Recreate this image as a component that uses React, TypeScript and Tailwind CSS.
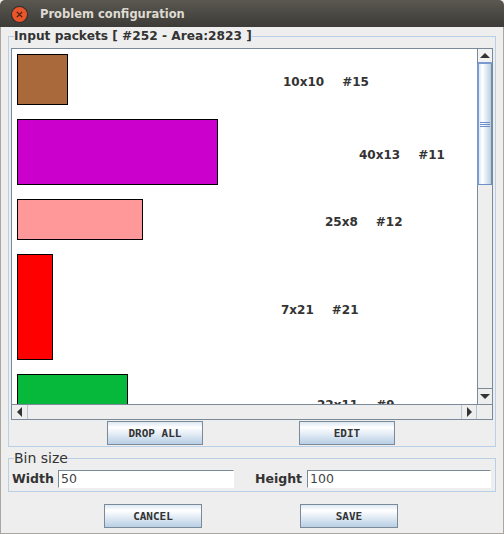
const packets = [
  { label: '10x10', id: '#15', box: 'w-[51px] h-[51px] bg-[#a9693a]', gap: 'ml-[215px]' },
  { label: '40x13', id: '#11', box: 'w-[201px] h-[66px] bg-[#cc00cc]', gap: 'ml-[141px]' },
  { label: '25x8', id: '#12', box: 'w-[126px] h-[41px] bg-[#ff9999]', gap: 'ml-[182px]' },
  { label: '7x21', id: '#21', box: 'w-[36px] h-[106px] bg-[#ff0000]', gap: 'ml-[228px]' },
  { label: '22x11', id: '#9', box: 'w-[111px] h-[56px] bg-[#06b93a]', gap: 'ml-[189px]' },
]

function JavaButton({ children, className }: { children: string; className: string }) {
  return (
    <button
      type="button"
      className={`h-[24px] border border-[#7a8a99] bg-gradient-to-b from-[#dde8f3] via-[#ffffff] via-[25%] to-[#b8cfe5] pt-[2px] font-['DejaVu_Sans_Mono'] text-[11px] font-bold text-[#333333] ${className}`}
    >
      {children}
    </button>
  )
}

export default function App() {
  return (
    <div className="flex h-[534px] w-[504px] flex-col overflow-hidden bg-[#eeeeee] font-['DejaVu_Sans',sans-serif] text-[#333333]">
      <div className="flex h-[27px] shrink-0 items-center rounded-t-[5px] bg-gradient-to-b from-[#5a5851] to-[#3c3b37] pt-[1px] pl-[12px]">
        <span className="flex h-[15px] w-[15px] items-center justify-center rounded-full bg-[#e9562a] text-[#4a2010] ring-1 ring-[#2f2e2b]">
          <svg viewBox="0 0 8 8" className="h-[7px] w-[7px]" fill="none" stroke="currentColor" strokeWidth="1.6">
            <path d="M1 1l6 6M7 1l-6 6" />
          </svg>
        </span>
        <span className="ml-[13px] pt-[1px] text-[11.5px] font-bold text-[#dfdbd2]">Problem configuration</span>
      </div>

      <div className="flex flex-1 flex-col border-x border-b border-[#a8a69f] px-[7px]">
        <fieldset className="mt-[2px] h-[418px] border border-[#b8cfe5] px-[2px] pb-0">
          <legend className="ml-[3px] text-[12.2px] leading-[15px] font-bold">Input packets [ #252 - Area:2823 ]</legend>
          <div className="mt-[4px] flex h-[372px] flex-col border border-[#7a8a99]">
            <div className="flex min-h-0 flex-1">
              <div className="flex-1 overflow-hidden bg-white pt-[5px] pl-[5px]">
                {packets.map((p) => (
                  <div key={p.id} className="mb-[14px] flex items-center">
                    <div className={`shrink-0 border border-black ${p.box}`} />
                    <div className={`flex gap-[18px] pt-[5px] text-[12px] font-bold ${p.gap}`}>
                      <span>{p.label}</span>
                      <span>{p.id}</span>
                    </div>
                  </div>
                ))}
              </div>
              <div className="flex w-[15px] flex-col border-l border-[#7a8a99] bg-[#eeeeee]">
                <div className="flex h-[15px] items-center justify-center border-b-2 border-[#7a9bd0] bg-[#f2f2f2]">
                  <span className="border-x-[5px] border-b-[5px] border-x-transparent border-b-[#333333]" />
                </div>
                <div className="-ml-px flex h-[121px] flex-col items-center justify-center gap-[1px] border-r border-b border-l-2 border-r-[#7a8a99] border-b-[#6f8fc8] border-l-[#7a9bd0] bg-gradient-to-r from-[#dfe9f5] via-[#ffffff] via-[30%] to-[#b8cfe5]">
                  <span className="h-px w-[10px] bg-[#6f8fc8]" />
                  <span className="h-px w-[10px] bg-[#6f8fc8]" />
                  <span className="h-px w-[10px] bg-[#6f8fc8]" />
                </div>
                <div className="flex-1" />
                <div className="flex h-[16px] items-center justify-center border-t border-[#7a8a99]">
                  <span className="border-x-[5px] border-t-[5px] border-x-transparent border-t-[#333333]" />
                </div>
              </div>
            </div>
            <div className="flex h-[15px] shrink-0 border-t border-[#7a8a99] bg-[#eeeeee]">
              <div className="flex w-[16px] items-center justify-center border-r border-[#b8c4d0]">
                <span className="border-y-[5px] border-r-[5px] border-y-transparent border-r-[#333333]" />
              </div>
              <div className="flex-1" />
              <div className="flex w-[16px] items-center justify-center border-x border-[#b8c4d0]">
                <span className="border-y-[5px] border-l-[5px] border-y-transparent border-l-[#333333]" />
              </div>
              <div className="w-[15px]" />
            </div>
          </div>
          <div className="mt-[1px] flex">
            <JavaButton className="ml-[96px] w-[96px]">DROP ALL</JavaButton>
            <JavaButton className="ml-[96px] w-[96px]">EDIT</JavaButton>
          </div>
        </fieldset>

        <fieldset className="mt-[4px] h-[41px] border border-[#b8cfe5] pr-[3px] pl-[3px]">
          <legend className="ml-[2px] text-[14px] leading-[15px]">Bin size</legend>
          <div className="mt-[4px] flex items-center">
            <label className="w-[46px] text-[12.5px] font-bold">Width</label>
            <input
              readOnly
              value="50"
              className="h-[18px] w-[176px] border border-[#7a8a99] border-r-white border-b-white bg-white pl-[2px] text-[12.5px] text-[#444444] outline-none"
            />
            <label className="ml-[21px] w-[52px] text-[12.5px] font-bold">Height</label>
            <input
              readOnly
              value="100"
              className="h-[18px] w-[184px] border border-[#7a8a99] border-r-white border-b-white bg-white pl-[2px] text-[12.5px] text-[#444444] outline-none"
            />
          </div>
        </fieldset>

        <div className="mt-[12px] flex">
          <JavaButton className="ml-[96px] w-[98px]">CANCEL</JavaButton>
          <JavaButton className="ml-[98px] w-[98px]">SAVE</JavaButton>
        </div>
      </div>
    </div>
  )
}
